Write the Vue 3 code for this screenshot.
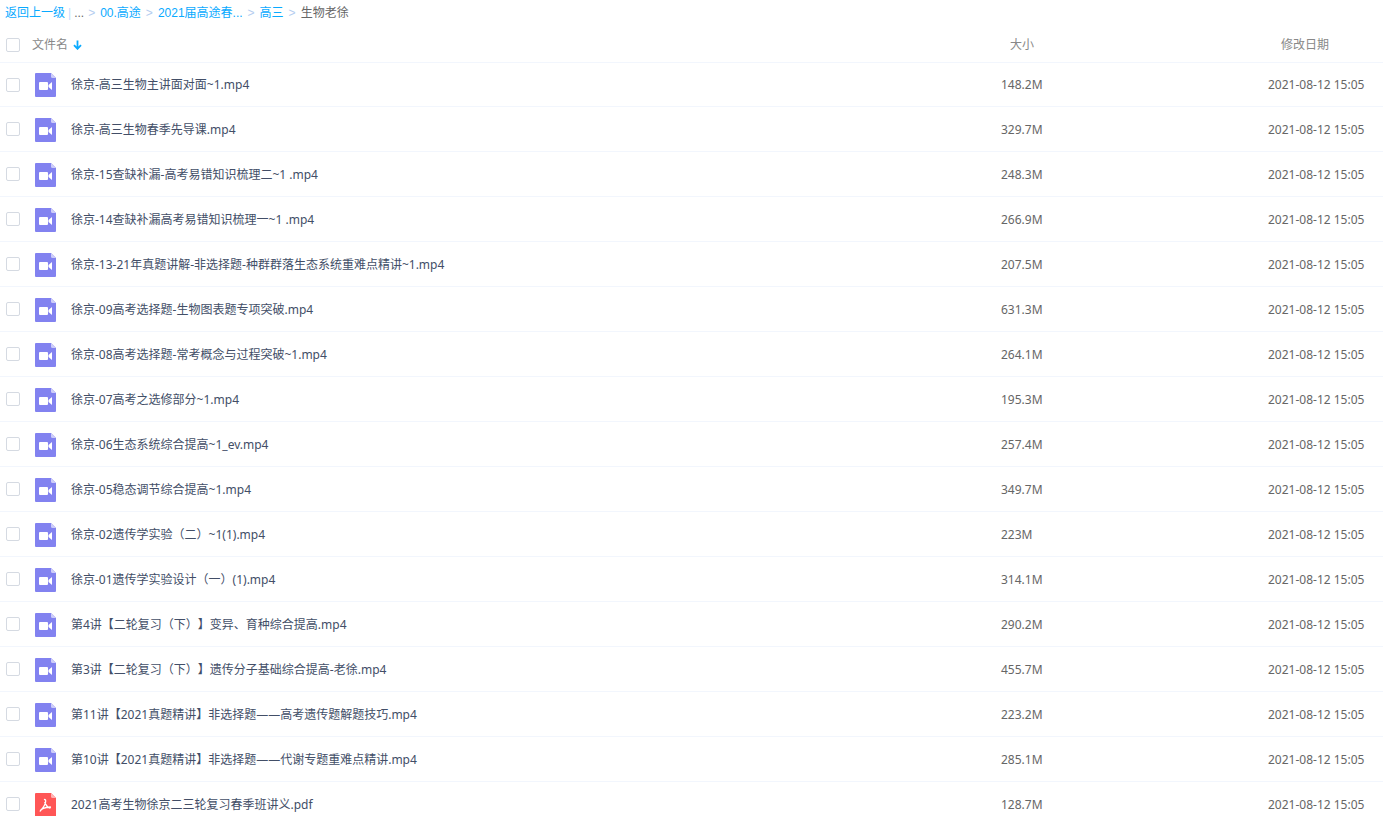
<script setup>
import { ref } from 'vue'

const crumbs = ['00.高途', '2021届高途春...', '高三']
const date = '2021-08-12 15:05'
const files = ref(
  [
    ['徐京-高三生物主讲面对面~1.mp4', '148.2M'],
    ['徐京-高三生物春季先导课.mp4', '329.7M'],
    ['徐京-15查缺补漏-高考易错知识梳理二~1 .mp4', '248.3M'],
    ['徐京-14查缺补漏高考易错知识梳理一~1 .mp4', '266.9M'],
    ['徐京-13-21年真题讲解-非选择题-种群群落生态系统重难点精讲~1.mp4', '207.5M'],
    ['徐京-09高考选择题-生物图表题专项突破.mp4', '631.3M'],
    ['徐京-08高考选择题-常考概念与过程突破~1.mp4', '264.1M'],
    ['徐京-07高考之选修部分~1.mp4', '195.3M'],
    ['徐京-06生态系统综合提高~1_ev.mp4', '257.4M'],
    ['徐京-05稳态调节综合提高~1.mp4', '349.7M'],
    ['徐京-02遗传学实验（二）~1(1).mp4', '223M'],
    ['徐京-01遗传学实验设计（一）(1).mp4', '314.1M'],
    ['第4讲【二轮复习（下）】变异、育种综合提高.mp4', '290.2M'],
    ['第3讲【二轮复习（下）】遗传分子基础综合提高-老徐.mp4', '455.7M'],
    ['第11讲【2021真题精讲】非选择题——高考遗传题解题技巧.mp4', '223.2M'],
    ['第10讲【2021真题精讲】非选择题——代谢专题重难点精讲.mp4', '285.1M'],
    ['2021高考生物徐京二三轮复习春季班讲义.pdf', '128.7M'],
  ].map(([name, size]) => ({ name, size, pdf: name.endsWith('.pdf'), checked: false }))
)

function toggleAll(event) {
  files.value.forEach((file) => (file.checked = event.target.checked))
}
</script>

<template>
  <main class="page">
    <nav class="crumbs" aria-label="路径">
      <a href="#">返回上一级</a>
      <span class="bar">|</span>
      <span class="dots">...</span>
      <template v-for="crumb in crumbs" :key="crumb">
        <span class="sep">&gt;</span>
        <a href="#">{{ crumb }}</a>
      </template>
      <span class="sep">&gt;</span>
      <span class="current">生物老徐</span>
    </nav>

    <table class="files">
      <colgroup>
        <col class="col-check" />
        <col />
        <col class="col-size" />
        <col class="col-date" />
      </colgroup>
      <thead>
        <tr>
          <th class="check"><input type="checkbox" aria-label="全选" @change="toggleAll" /></th>
          <th>
            <button class="sort" type="button">
              文件名
              <svg width="9" height="10" viewBox="0 0 9 10" aria-hidden="true">
                <path d="M4.5 0.5V8.5M1 5.2L4.5 8.8L8 5.2" fill="none" stroke="#09aaff" stroke-width="1.8" />
              </svg>
            </button>
          </th>
          <th class="size">大小</th>
          <th class="date">修改日期</th>
        </tr>
      </thead>
      <tbody>
        <tr v-for="file in files" :key="file.name">
          <td class="check"><input v-model="file.checked" type="checkbox" :aria-label="file.name" /></td>
          <td>
            <div class="file">
              <svg class="icon" width="21" height="24" viewBox="0 0 21 24" aria-hidden="true">
                <template v-if="file.pdf">
                  <path d="M1 0H16L21 5V23Q21 24 20 24H1Q0 24 0 23V1Q0 0 1 0Z" fill="#ff5656" />
                  <path d="M16 0L21 5H17.5Q16 5 16 3.5Z" fill="#ffb3b3" />
                  <path
                    d="M9.5 6.5Q11 6.5 10.6 9Q10.2 12.5 5.2 18Q6.5 14.8 15.2 14Q15.8 13.8 15 15Q12 14.5 9.8 9.5"
                    fill="none"
                    stroke="#fff"
                    stroke-width="1.3"
                    stroke-linecap="round"
                    stroke-linejoin="round"
                  />
                </template>
                <template v-else>
                  <path d="M1 0H16L21 5V23Q21 24 20 24H1Q0 24 0 23V1Q0 0 1 0Z" fill="#8282f0" />
                  <path d="M16 0L21 5H17.5Q16 5 16 3.5Z" fill="#cdcdf9" />
                  <rect x="4" y="9" width="9" height="8" rx="1" fill="#fff" />
                  <path d="M17 9V17L13.5 14V12Z" fill="#fff" />
                </template>
              </svg>
              <a href="#">{{ file.name }}</a>
            </div>
          </td>
          <td>{{ file.size }}</td>
          <td>{{ date }}</td>
        </tr>
      </tbody>
    </table>
  </main>
</template>

<style>
body {
  margin: 0;
  background: #fff;
}
</style>

<style scoped>
.page {
  font-family: "Noto Sans", "Noto Sans CJK SC", sans-serif;
  font-size: 12px;
  line-height: 18px;
  color: #666;
  text-spacing-trim: space-all;
}

a {
  color: inherit;
  text-decoration: none;
}

.crumbs {
  display: flex;
  height: 26px;
  padding-left: 5px;
  align-items: center;
  font-family: "Liberation Sans", "Noto Sans CJK SC", sans-serif;
}

.crumbs a {
  color: #09aaff;
}

.bar {
  margin: 0 3px;
  color: #c4dbfe;
}

.sep {
  margin: 0 5px;
  color: #b4cdf0;
}

.dots + .sep {
  margin-left: 4px;
}

.files {
  width: 100%;
  table-layout: fixed;
  border-spacing: 0;
}

.col-check {
  width: 32px;
}

.col-size {
  width: 267px;
}

.col-date {
  width: 115px;
}

th,
td {
  box-sizing: border-box;
  height: 45px;
  padding: 0;
  border-bottom: 1px solid #f2f6fd;
  text-align: left;
  white-space: nowrap;
  vertical-align: middle;
}

td {
  padding-top: 2px;
}

th {
  height: 37px;
  padding-top: 1px;
  font-weight: 400;
  color: #888;
}

tbody tr:first-child td {
  height: 44px;
  padding-top: 1px;
}

th.size {
  padding-left: 9px;
}

th.date {
  padding-left: 13px;
}

.check {
  padding-left: 6px;
}

tbody td.check,
tbody tr:first-child td.check {
  padding-top: 0;
}

input {
  display: block;
  box-sizing: border-box;
  width: 14px;
  height: 14px;
  margin: 0;
  appearance: none;
  border: 1px solid #d5dae2;
  border-radius: 2px;
  background: #fff;
}

input:checked {
  border-color: #09aaff;
  background: #09aaff;
}

.sort {
  display: flex;
  align-items: center;
  gap: 5px;
  padding: 0;
  border: 0;
  background: none;
  color: inherit;
  font: inherit;
  cursor: pointer;
}

.file {
  display: flex;
  align-items: center;
  gap: 15px;
  padding-left: 3px;
  color: #424e67;
}

.icon {
  flex: none;
}
</style>
